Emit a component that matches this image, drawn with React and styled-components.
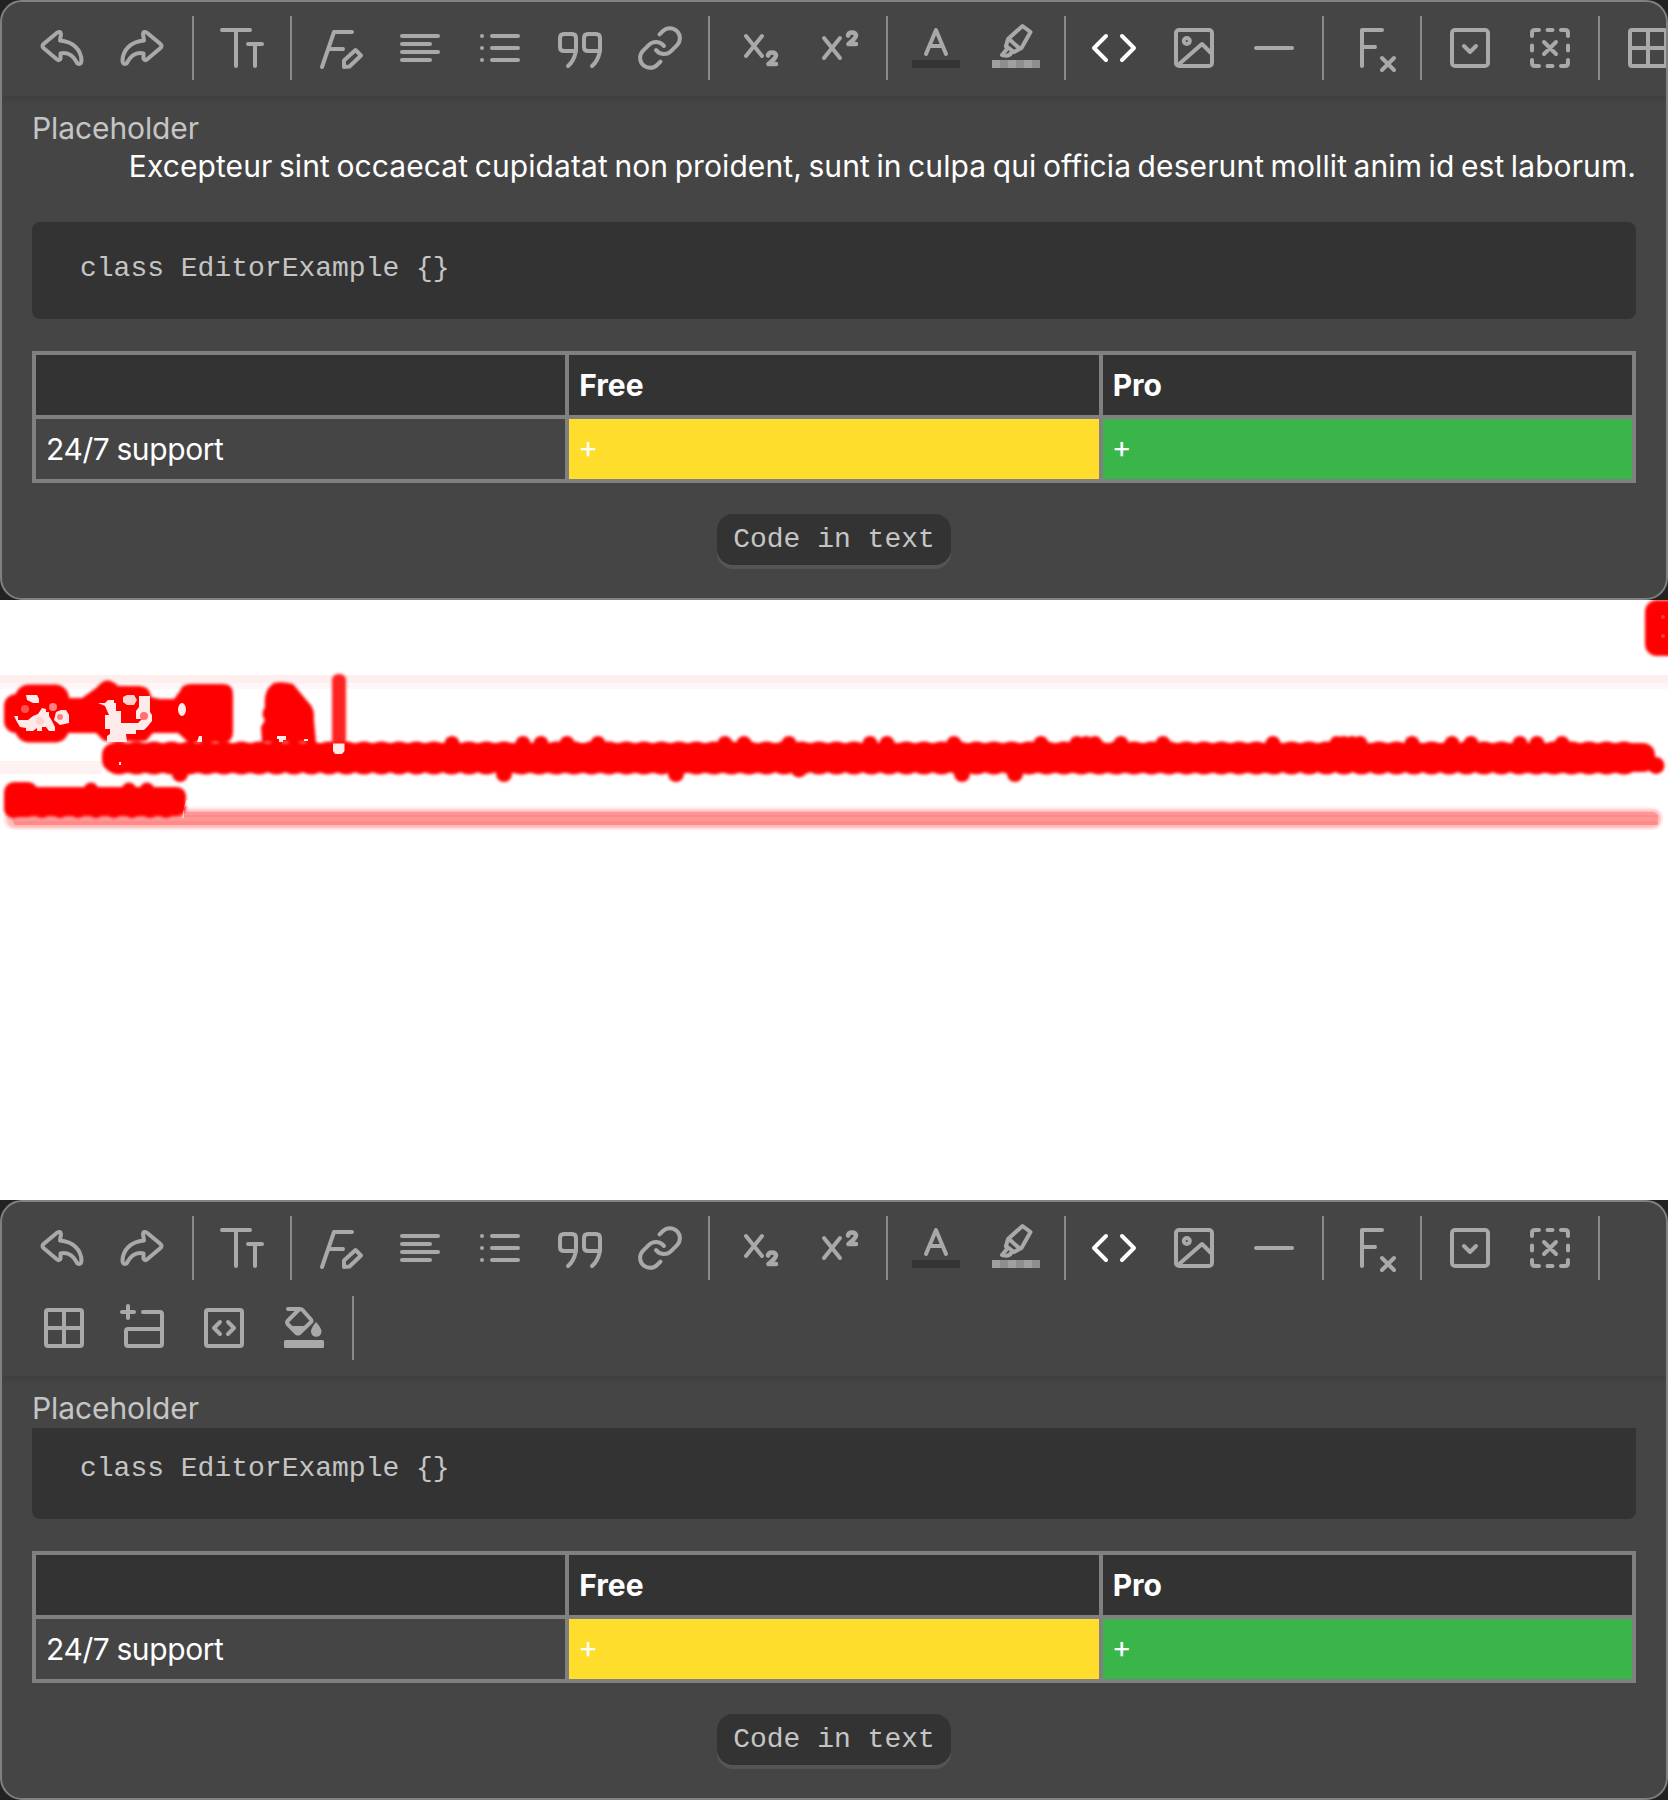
import React from "react";
import styled, { createGlobalStyle } from "styled-components";

const Global = createGlobalStyle`
  * { box-sizing: border-box; }
  html, body { margin: 0; padding: 0; background: #fff; }
  body { font-family: Inter, "Noto Sans", sans-serif; overflow: hidden; }
`;

const Page = styled.main`
  display: flex;
  flex-direction: column;
  width: 1668px;
  height: 1800px;
`;

const Frame = styled.section`
  height: 600px;
  background: #222;
`;

const Card = styled.div`
  display: flex;
  flex-direction: column;
  height: 600px;
  border: 2px solid #808080;
  border-radius: 22px;
  background: #454545;
  color: #fff;
  overflow: hidden;
`;

const Toolbar = styled.div`
  display: flex;
  flex: none;
  flex-wrap: ${(p) => (p.$wrap ? "wrap" : "nowrap")};
  padding: 6px 0 8px 22px;
  box-shadow: 0 2px 6px rgba(0, 0, 0, 0.14);
`;

const ToolButton = styled.button`
  display: flex;
  flex: none;
  align-items: center;
  justify-content: center;
  width: 80px;
  height: 80px;
  padding: 0;
  border: 0;
  background: none;
  color: ${(p) => (p.$active ? "#fff" : "#a9a9a9")};
`;

const Icon = styled.svg`
  display: block;
  width: 48px;
  height: 48px;
  overflow: visible;
  fill: none;
  stroke: currentColor;
  stroke-width: 4;
  stroke-linecap: round;
  stroke-linejoin: round;
`;

const Divider = styled.span`
  flex: none;
  width: 2px;
  height: 64px;
  margin: 8px 0 8px 8px;
  background: #8a8a8a;
`;

const Placeholder = styled.div`
  flex: none;
  height: 52px;
  padding: 10px 30px 0;
  font-size: 30px;
  line-height: 44px;
  letter-spacing: -0.1px;
  color: #c5c5c5;
`;

const Content = styled.div`
  display: flex;
  flex: 1;
  min-height: 0;
  flex-direction: column;
  justify-content: flex-end;
  padding: 0 30px 33px;
  overflow: hidden;
`;

const Paragraph = styled.p`
  flex: none;
  margin: 0 0 34px;
  font-size: 30px;
  line-height: 44px;
  letter-spacing: 0.09px;
  word-spacing: -2px;
  text-align: right;
  white-space: nowrap;
`;

const Pre = styled.pre`
  flex: none;
  height: 97px;
  margin: 0 0 32px;
  padding: 30px 48px 0;
  border-radius: 8px;
  background: #333;
  color: #c5c5c5;
  font: 28px/34px "Liberation Mono", monospace;
`;

const Table = styled.table`
  flex: none;
  width: 1604px;
  height: 132px;
  table-layout: fixed;
  border-collapse: collapse;
`;

const Cell = styled.td`
  height: 64px;
  padding: 0 10px;
  border: 4px solid #808080;
  background: ${(p) => p.$fill || "transparent"};
  font-size: 30px;
  line-height: 44px;
  letter-spacing: ${(p) => (p.$head ? "0" : "-0.4px")};
  word-spacing: ${(p) => (p.$head ? "0" : "-1px")};
  text-align: left;
  font-weight: ${(p) => (p.$head ? 700 : 400)};
`;

const Plus = styled.span`
  display: block;
  height: 44px;
  margin: -2px 0 2px -1px;
  font-size: 30px;
`;

const ChipRow = styled.div`
  display: flex;
  flex: none;
  justify-content: center;
  margin-top: 31px;
`;

const Chip = styled.code`
  height: 51px;
  padding: 0 16px;
  border-radius: 16px;
  background: #333;
  box-shadow: 0 4px 0 #555;
  color: #c5c5c5;
  font: 28px/52px "Liberation Mono", monospace;
`;

const DiffView = styled.svg`
  display: block;
  flex: none;
  width: 1668px;
  height: 600px;
  background: #fff;
`;

const TWO = "M34 31.5 Q34.5 28.5 38 28.5 T42 31.5 Q42 34 34.5 40 H42";

const ARROW =
  "M3.5 20 L17 8.8 Q20.5 6.5 21 10 L20 16.5 C33 17.5 41.5 26 41.5 37 Q41 41 37.5 39.5 C33 31 27 28 20.5 29.5 V34.5 Q19.5 37.5 16.5 35 L3.5 24 Q1.5 22 3.5 20Z";

const icons = {
  undo: <path d={ARROW} />,
  redo: <path d={ARROW} transform="matrix(-1 0 0 1 44 0)" />,
  size: <path d="M4 6H32M18 6V42M30 20H44M37 20V42" />,
  style: <><path d="M6 43L18 8H36M13 25H27" /><path d="M28 36.5L39.5 26L45 31.5L33.5 42.5L28 43Z" /></>,
  align: <path d="M6 12H42M6 20H34M6 28H42M6 36H34" />,
  list: <path d="M6 12H6.01M6 24H6.01M6 36H6.01M16 12H42M16 24H42M16 36H42" />,
  quote: <path d="M20 27H8Q4 27 4 23V14Q4 10 8 10H16Q20 10 20 14V27Q18 37 12 42M44 27H32Q28 27 28 23V14Q28 10 32 10H40Q44 10 44 14V27Q42 37 36 42" />,
  link: <path strokeWidth="2" transform="scale(2)" d="M10 13a5 5 0 0 0 7.54.54l3-3a5 5 0 0 0-7.07-7.07l-1.72 1.71M14 11a5 5 0 0 0-7.54-.54l-3 3a5 5 0 0 0 7.07 7.07l1.71-1.71" />,
  sub: <><path d="M12 12L28 32M28 12L12 32" /><path d={TWO} strokeWidth="4.6" /></>,
  sup: <><path d="M10 14L26 34M26 14L10 34" /><path d={TWO} strokeWidth="4.6" transform="translate(0 -20)" /></>,
  color: <><path d="M14 30L24 6L34 30M18 22H30" /><path d="M0 36H48V44H0Z" fill="#333" stroke="none" /></>,
  hilite: (
    <>
      <path d="M30.5 2L38.5 8L29.5 24L22 28L14 22L16 15Z" />
      <path d="M17 15L27 24M14 22L15 25L10 31Q17 33 19 29L21 28" />
      {[0, 1, 2, 3, 4, 5].map((i) => (
        <rect key={i} x={i * 8} y="36" width="8" height="8" stroke="none" fill={i % 2 ? "#8d8f92" : "#a0a0a0"} />
      ))}
    </>
  ),
  code: <path d="M16 12L4 24L16 36M32 12L44 24L32 36" />,
  image: <><rect x="6" y="6" width="36" height="36" rx="3" /><circle cx="16.8" cy="17" r="3" /><path d="M8 41L32 20L42 30" /></>,
  rule: <path d="M6 24H42" />,
  clear: <path d="M14 42V6H34M14 23H27M34 34L46 46M46 34L34 46" />,
  details: <><rect x="6" y="6" width="36" height="36" rx="3" /><path d="M18 22L24 28L30 22" /></>,
  ungroup: <path d="M6 12V9Q6 6 9 6H13M21.5 6H26.5M35 6H39Q42 6 42 9V12M42 21.5V26.5M42 36V39Q42 42 39 42H35M26.5 42H21.5M13 42H9Q6 42 6 39V36M6 26.5V21.5M18 18L30 30M30 18L18 30" />,
  table: <><rect x="6" y="6" width="36" height="36" rx="2" /><path d="M24 6V42M6 24H42" /></>,
  insert: <path d="M2 8H14M8 2V14M23 8H40Q42 8 42 10V40Q42 42 40 42H8Q6 42 6 40V27Q6 25 8 25H42" />,
  block: <><rect x="6" y="6" width="36" height="36" rx="2" /><path d="M20 18L14 24L20 30M28 18L34 24L28 30" /></>,
  fill: (
    <>
      <path d="M8 5H20Q21.500 5 22.500 6L31 15.500Q32 17 31 18L19.500 29Q18 30 16.500 29L8 20.500Q6 18.500 8 16.500L18.500 6" />
      <path d="M10 22H27L18 30Z" fill="currentColor" stroke="none" />
      <path d="M36 18Q41.500 24 41.500 27.500A5 5 0 0 1 31 27.500Q31 24 36 18Z" fill="currentColor" stroke="none" />
      <rect x="4" y="36" width="40" height="8" rx="1.5" fill="currentColor" stroke="none" />
    </>
  ),
};

const tools = [
  "undo", "redo", "|", "size", "|", "style", "align", "list", "quote", "link", "|",
  "sub", "sup", "|", "color", "hilite", "|", "code", "image", "rule", "|", "clear", "|",
  "details", "ungroup", "|", "table", "insert", "block", "fill", "|",
];

// Each divider takes ten pixels, with eight more before the next button on the same line.
const Spacer = styled.span`
  flex: none;
  width: 8px;
`;

function Tools({ wrap }) {
  return (
    <Toolbar $wrap={wrap}>
      {tools.map((name, i) =>
        name === "|" ? (
          <React.Fragment key={i}>
            <Divider />
            <Spacer />
          </React.Fragment>
        ) : (
          <ToolButton key={i} $active={name === "code"} aria-label={name}>
            <Icon viewBox="0 0 48 48">{icons[name]}</Icon>
          </ToolButton>
        )
      )}
    </Toolbar>
  );
}

function Editor({ wrap, intro }) {
  return (
    <Frame>
      <Card>
        <Tools wrap={wrap} />
        <Placeholder>Placeholder</Placeholder>
        <Content>
          {intro && (
            <Paragraph>
              Excepteur sint occaecat cupidatat non proident, sunt in culpa qui officia deserunt mollit anim id est laborum.
            </Paragraph>
          )}
          <Pre>{"class EditorExample {}"}</Pre>
          <Table>
            <tbody>
              <tr>
                <Cell as="th" $head $fill="#333" />
                <Cell as="th" $head $fill="#333">Free</Cell>
                <Cell as="th" $head $fill="#333">Pro</Cell>
              </tr>
              <tr>
                <Cell>24/7 support</Cell>
                <Cell $fill="#ffdd2d"><Plus>+</Plus></Cell>
                <Cell $fill="#39b54a"><Plus>+</Plus></Cell>
              </tr>
            </tbody>
          </Table>
          <ChipRow>
            <Chip>Code in text</Chip>
          </ChipRow>
        </Content>
      </Card>
    </Frame>
  );
}

const ascenders = [452, 523, 541, 567, 598, 725, 744, 789, 870, 887, 954, 1041, 1077, 1086, 1095, 1121, 1163, 1273, 1337, 1344, 1352, 1360, 1412, 1452, 1471, 1520, 1537, 1562];
const descenders = [180, 504, 676, 962, 1015];

function Diff() {
  return (
    <DiffView viewBox="0 0 1668 600">
      <defs>
        <filter id="soft" x="-5%" y="-20%" width="110%" height="140%">
          <feGaussianBlur stdDeviation="1.5" />
        </filter>
      </defs>
      <rect y="75" width="1668" height="8" fill="#ffeeee" />
      <rect y="83" width="1668" height="6" fill="#fff7f7" />
      <rect y="161" width="102" height="13" fill="#fff2f2" />
      <g filter="url(#soft)">
        <rect x="4" y="208" width="1658" height="21" rx="10" fill="#ffe0e0" />
        <rect x="7" y="210" width="1654" height="18" rx="8" fill="#ffb8b8" />
      </g>
      <rect x="12" y="212" width="1646" height="13" rx="6" fill="#ff9696" />
      <rect x="14" y="215" width="1644" height="2" fill="#ff8a8a" />
      <rect x="14" y="221" width="1644" height="4" rx="2" fill="#ff8a8a" />
      <g fill="red" filter="url(#soft)">
        <rect x="1645" y="0" width="40" height="56" rx="12" />
        <rect x="4" y="94" width="30" height="39" rx="12" />
        <rect x="15" y="84.500" width="54" height="58" rx="14" />
        <path d="M66 98H82L96 88L100 84Q107 77 116 84L118 86H138Q150 86 151 97L160 99H174L180 91Q182 84 191 84H223Q233 84 233 95V132Q233 142 224 142H188L178 133L153 133L146 141H104L96 133H68Z" />
        <path d="M274 83Q282 81 293 84L308 102Q315 108 314 120L316 142H262L261 127L265 120Q260 114 265 107Q263 90 274 83Z" />
        <rect x="332" y="74" width="14" height="72" rx="6" fill="#ff2020" />
        <rect x="102" y="143" width="1553" height="29" rx="12" />
        <line x1="119" x2="1640" y1="158" y2="158" stroke="red" strokeWidth="33" strokeLinecap="round" strokeDasharray="0 17.5" />
        {ascenders.map((x) => <circle key={x} cx={x} cy="143.500" r="7.500" />)}
        {descenders.map((x) => <circle key={x} cx={x} cy="174" r="8" />)}
        <circle cx="799" cy="169" r="8.500" />
        <circle cx="1656" cy="165.500" r="8.500" />
        <rect x="4" y="187" width="182" height="29" rx="9" />
        <rect x="4" y="182" width="34" height="35" rx="10" />
        <rect x="4" y="200" width="19" height="18" rx="9" />
        {[91, 129, 147].map((x) => <circle key={x} cx={x} cy="190" r="7.500" />)}
        {[42, 60, 78, 96, 114, 132, 150, 166].map((x) => <circle key={x} cx={x} cy="209" r="9" />)}
      </g>
      <path d="M182 218L186 200H194V206H184V218Z" fill="#fff" opacity="0.6" />
      <g fill="#ffeaea">
        <path d="M26 95H37L39 99V103H33L27 100Z" />
        <path d="M14 116H18V120H22L28 120L33 116L38 114L42 108L46 109V112H49V116L52 121L55 127V131H49L46 127H42V131H37V128L33 131H26V128L20 127L17 122Z" />
        <path d="M56 112L61 110H66L69 115V123L60 125L54 120Z" />
        <path d="M98 103H105L108 100H114V103H116V111H121V123H138L142 119H136V111L139 107V96H150V112L152 115V121L148 126L144 130H136V134H126L127 142H107V136L110 134V129H105V115H109L105 106Z" />
        <path d="M123 97L127 95H134L137 100L134 105H127L123 102Z" fill="#ffd0d0" />
        <ellipse cx="182" cy="109.500" rx="4" ry="6.500" />
        <path d="M199 136H202V142H197Z M277 136H286V140H283V142H279V139H277Z" />
        <path d="M304 139H308V141H304Z M119 162H121V165H119Z M333 143.500H344.500V151L342 154H335L333 151Z" />
      </g>
      <circle cx="25" cy="109" r="4" fill="#ff5050" />
      <circle cx="53" cy="107" r="4" fill="#ff8080" />
      <circle cx="60" cy="117" r="3" fill="#ff8080" />
      <circle cx="144" cy="116" r="4" fill="#ff7070" />
      <circle cx="40" cy="121" r="4" fill="#ffd0d0" />
      <circle cx="1663" cy="17" r="2" fill="#ff3838" />
      <circle cx="1663" cy="36" r="2" fill="#ff3838" />
    </DiffView>
  );
}

export default function App() {
  return (
    <>
      <Global />
      <Page>
        <Editor intro />
        <Diff />
        <Editor wrap />
      </Page>
    </>
  );
}
